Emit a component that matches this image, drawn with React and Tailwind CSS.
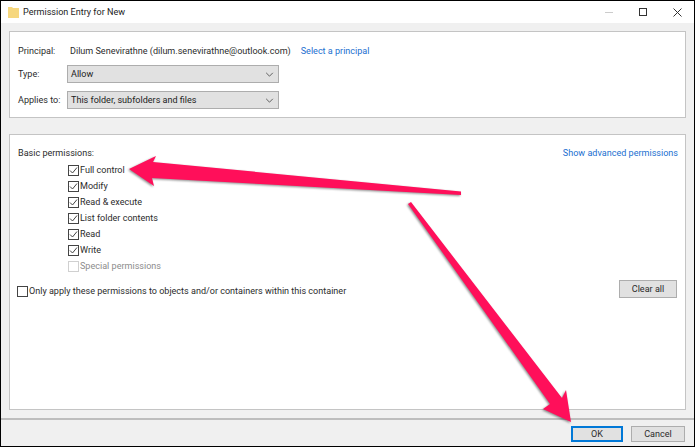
const Check = ({ checked = true, disabled = false }) => (
    <span className={`flex h-[11px] w-[11px] shrink-0 items-center justify-center border bg-white ${disabled ? 'border-[#d0d0d0]' : 'border-[#444]'}`}>
        {checked && (
            <svg viewBox="0 0 9 9" className="h-[9px] w-[9px]">
                <path d="M1 4.5 L3.5 7 L8 1.5" fill="none" stroke="#444" strokeWidth="1" />
            </svg>
        )}
    </span>
);

const Select = ({ value }) => (
    <div className="flex h-[18px] w-[212px] items-center justify-between border border-[#adadad] bg-[#e1e1e1] px-[3px] text-[#222]">
        <span>{value}</span>
        <svg viewBox="0 0 10 6" className="mr-[1px] h-[5px] w-[9px]">
            <path d="M1 1 L5 5 L9 1" fill="none" stroke="#555" strokeWidth="1.1" />
        </svg>
    </div>
);

const perms = ['Full control', 'Modify', 'Read & execute', 'List folder contents', 'Read', 'Write'];

export default function App() {
    return (
        <div className="relative flex h-[447px] w-[695px] flex-col overflow-hidden whitespace-nowrap border border-black bg-[#f0f0f0] font-['Roboto',sans-serif] text-[9.05px] leading-[14px] text-[#2b2b2b]">
            {/* Title bar */}
            <div className="flex h-[22px] shrink-0 items-center bg-white pl-[7px]">
                <svg viewBox="0 0 11 12" className="h-[12px] w-[11px]">
                    <path d="M0 1 H4 L5 2 H11 V12 H0 Z" fill="#f6d77e" />
                </svg>
                <span className="ml-[4px] text-[#222]">Permission Entry for New</span>
                <div className="ml-auto flex items-center">
                    <span className="h-[1px] w-[8px] bg-[#ccc]" />
                    <span className="ml-[26px] h-[8px] w-[8px] border border-[#333]" />
                    <svg viewBox="0 0 9 9" className="ml-[26px] mr-[12px] h-[9px] w-[9px]">
                        <path d="M0.5 0.5 L8.5 8.5 M8.5 0.5 L0.5 8.5" stroke="#333" strokeWidth="1" />
                    </svg>
                </div>
            </div>

            {/* Top panel */}
            <div className="mx-[8px] mt-[8px] flex h-[87px] shrink-0 flex-col border border-[#c4c4c4] bg-white pl-[8px] pt-[12px]">
                <div className="flex h-[14px] items-center">
                    <span className="w-[52px]">Principal:</span>
                    <span>Dilum Senevirathne (dilum.senevirathne@outlook.com)</span>
                    <span className="ml-[10px] text-[#1a6fd0]">Select a principal</span>
                </div>
                <div className="mt-[7px] flex items-center">
                    <span className="w-[49px]">Type:</span>
                    <Select value="Allow" />
                </div>
                <div className="mt-[8px] flex items-center">
                    <span className="w-[49px]">Applies to:</span>
                    <Select value="This folder, subfolders and files" />
                </div>
            </div>

            {/* Basic permissions panel */}
            <div className="mx-[8px] mt-[16px] flex h-[276px] shrink-0 flex-col border border-[#c4c4c4] bg-white pl-[8px] pr-[7px] pt-[11px]">
                <div className="flex items-center justify-between">
                    <span>Basic permissions:</span>
                    <span className="text-[#1a6fd0]">Show advanced permissions</span>
                </div>
                <div className="mt-[2px] flex flex-col pl-[50px]">
                    {perms.map((p) => (
                        <div key={p} className="flex h-[16px] items-center gap-[1px]">
                            <Check />
                            <span>{p}</span>
                        </div>
                    ))}
                    <div className="flex h-[16px] items-center gap-[1px]">
                        <Check checked={false} disabled />
                        <span className="text-[#8c8c8c]">Special permissions</span>
                    </div>
                </div>
                <div className="mt-[6px] flex items-start justify-between">
                    <div className="-ml-[1px] mt-[4px] flex items-center gap-[1px]">
                        <Check checked={false} />
                        <span>Only apply these permissions to objects and/or containers within this container</span>
                    </div>
                    <div className="mr-[1px] flex h-[18px] w-[58px] items-center justify-center border border-[#adadad] bg-[#e1e1e1]">Clear all</div>
                </div>
            </div>

            {/* Footer */}
            <div className="mt-[8px] flex flex-1 items-start justify-end gap-[8px] border-t-2 border-[#bdbdbd] pr-[9px] pt-[6px]">
                <div className="flex h-[16px] w-[52px] items-center justify-center border-2 border-[#0078d7] bg-[#e1e1e1]">OK</div>
                <div className="flex h-[16px] w-[54px] items-center justify-center border border-[#adadad] bg-[#e1e1e1]">Cancel</div>
            </div>

            {/* Annotation arrows */}
            <svg className="absolute -left-px -top-px h-[447px] w-[695px] drop-shadow-[-1px_1.5px_1px_rgba(0,0,0,0.45)]" viewBox="0 0 695 447">
                <path d="M129 169 L156 156 L153 162 L461 191.5 L461 195 L152 178 L154 186 Z" fill="#ff0f5a" />
                <path d="M408 204 L411 202 L562 398 L566 390 L571 422 L543 409 L550 404 Z" fill="#ff0f5a" />
            </svg>
        </div>
    );
}
